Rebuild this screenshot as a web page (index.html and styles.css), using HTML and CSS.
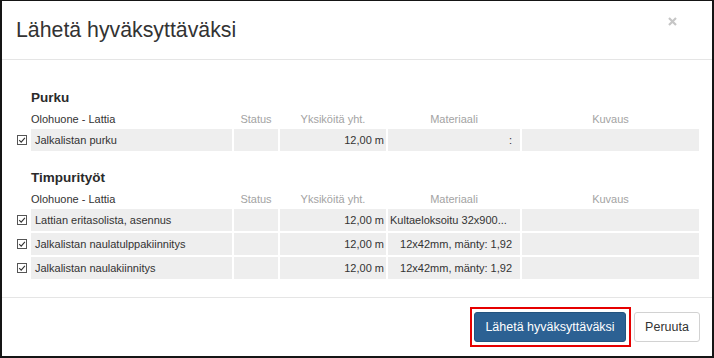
FILE: index.html
```html
<!DOCTYPE html>
<html lang="fi">
<head>
  <meta charset="UTF-8" />
  <meta name="viewport" content="width=device-width, initial-scale=1.0"/>
  <title>Lähetä hyväksyttäväksi</title>
  <link rel="stylesheet" href="styles.css">
</head>
<body>

  <div class="modal">
    <div class="modal-header">
      <h4 class="modal-title">Lähetä hyväksyttäväksi</h4>
      <button class="close" type="button" aria-label="Sulje">
        <svg width="9" height="9" viewBox="0 0 9 9"><path d="M1 1L8 8M8 1L1 8" stroke="#c6c6c6" stroke-width="2.2" fill="none"/></svg>
      </button>
    </div>

    <div class="modal-body">
      <section class="ryhma">
        <h5>Purku</h5>
        <table class="rivit">
          <colgroup>
            <col class="c-valinta"><col class="c-nimi"><col class="c-status"><col class="c-yks"><col class="c-mat"><col class="c-kuvaus">
          </colgroup>
          <tr class="otsikko">
            <th></th><th class="tila">Olohuone - Lattia</th><th>Status</th><th>Yksiköitä yht.</th><th>Materiaali</th><th>Kuvaus</th>
          </tr>
          <tr>
            <td class="valinta"><svg width="10" height="10" viewBox="0 0 10 10"><rect x=".5" y=".5" width="9" height="9" fill="#fff" stroke="#555"/><path d="M2.2 5.2L4.2 7.2L7.9 2.9" stroke="#333" stroke-width="1.1" fill="none"/></svg></td>
            <td>Jalkalistan purku</td><td></td><td class="num">12,00 m</td><td class="mat">:</td><td></td>
          </tr>
        </table>
      </section>

      <section class="ryhma">
        <h5>Timpurityöt</h5>
        <table class="rivit">
          <colgroup>
            <col class="c-valinta"><col class="c-nimi"><col class="c-status"><col class="c-yks"><col class="c-mat"><col class="c-kuvaus">
          </colgroup>
          <tr class="otsikko">
            <th></th><th class="tila">Olohuone - Lattia</th><th>Status</th><th>Yksiköitä yht.</th><th>Materiaali</th><th>Kuvaus</th>
          </tr>
          <tr>
            <td class="valinta"><svg width="10" height="10" viewBox="0 0 10 10"><rect x=".5" y=".5" width="9" height="9" fill="#fff" stroke="#555"/><path d="M2.2 5.2L4.2 7.2L7.9 2.9" stroke="#333" stroke-width="1.1" fill="none"/></svg></td>
            <td>Lattian eritasolista, asennus</td><td></td><td class="num">12,00 m</td><td class="mat vasen">Kultaeloksoitu 32x900...</td><td></td>
          </tr>
          <tr>
            <td class="valinta"><svg width="10" height="10" viewBox="0 0 10 10"><rect x=".5" y=".5" width="9" height="9" fill="#fff" stroke="#555"/><path d="M2.2 5.2L4.2 7.2L7.9 2.9" stroke="#333" stroke-width="1.1" fill="none"/></svg></td>
            <td>Jalkalistan naulatulppakiinnitys</td><td></td><td class="num">12,00 m</td><td class="mat">12x42mm, mänty: 1,92</td><td></td>
          </tr>
          <tr>
            <td class="valinta"><svg width="10" height="10" viewBox="0 0 10 10"><rect x=".5" y=".5" width="9" height="9" fill="#fff" stroke="#555"/><path d="M2.2 5.2L4.2 7.2L7.9 2.9" stroke="#333" stroke-width="1.1" fill="none"/></svg></td>
            <td>Jalkalistan naulakiinnitys</td><td></td><td class="num">12,00 m</td><td class="mat">12x42mm, mänty: 1,92</td><td></td>
          </tr>
        </table>
      </section>
    </div>

    <div class="modal-footer">
      <span class="korostus"><button class="btn btn-primary" type="button">Lähetä hyväksyttäväksi</button></span>
      <button class="btn btn-default" type="button">Peruuta</button>
    </div>
  </div>

</body>
</html>
```

FILE: styles.css
```css
* {
  box-sizing: border-box;
}

body {
  margin: 0;
  font-family: "Liberation Sans", Arial, sans-serif;
  color: #333;
  background: #fff;
}

.modal {
  height: 358px;
  border-style: solid;
  border-color: #151515;
  border-width: 1px 2px 2px 2px;
  display: flex;
  flex-direction: column;
}

.modal-header {
  height: 59px;
  border-bottom: 1px solid #e5e5e5;
  display: flex;
  align-items: center;
  padding: 0 35px 0 14px;
}

.modal-title {
  margin: 0;
  font-size: 21.3px;
  font-weight: normal;
  line-height: 24px;
  color: #333;
}

.close {
  margin-left: auto;
  align-self: flex-start;
  margin-top: 16px;
  padding: 0;
  border: none;
  background: none;
  line-height: 0;
}

.modal-body {
  flex: 1;
  padding: 30px 11px 0 13px;
}

.ryhma + .ryhma {
  margin-top: 17px;
}

.ryhma h5 {
  margin: 0 0 3px;
  padding-left: 16px;
  font-size: 13.5px;
  line-height: 16px;
  font-weight: bold;
  color: #2a2a2a;
}

.rivit {
  width: 686px;
  table-layout: fixed;
  border-collapse: separate;
  border-spacing: 2px;
  font-size: 11px;
}

.c-valinta { width: 12px; }
.c-nimi { width: 201px; }
.c-status { width: 44px; }
.c-yks { width: 106px; }
.c-mat { width: 132px; }
.c-kuvaus { width: 177px; }

.otsikko th {
  height: 16px;
  padding: 0;
  font-weight: normal;
  color: #a3a3a3;
  text-align: center;
  line-height: 16px;
}

.otsikko th.tila {
  text-align: left;
  color: #333;
}

.rivit td {
  height: 22px;
  padding: 0 4px;
  line-height: 22px;
  background: #eeeeee;
  white-space: nowrap;
  overflow: hidden;
}

.rivit td.valinta {
  background: none;
  padding: 0;
  line-height: 0;
  vertical-align: middle;
}

.rivit td.num {
  text-align: right;
  padding-right: 2px;
}

.rivit td.mat {
  text-align: right;
  padding-right: 8px;
}

.rivit td.mat.vasen {
  text-align: left;
  padding-left: 2px;
}

.modal-footer {
  height: 59px;
  border-top: 1px solid #e5e5e5;
  display: flex;
  justify-content: flex-end;
  align-items: center;
  padding-right: 12px;
}

.korostus {
  display: inline-flex;
  border: 2px solid #e60000;
  padding: 3px 3px 3px 2px;
}

.btn {
  height: 30px;
  padding: 0;
  font-family: "Liberation Sans", Arial, sans-serif;
  font-size: 12.5px;
  text-align: center;
  border-radius: 3px;
  border: 1px solid transparent;
  cursor: pointer;
}

.btn-primary {
  width: 152px;
  background: #2c6193;
  border-color: #23537f;
  color: #fff;
}

.btn-default {
  width: 66px;
  margin-left: 3px;
  background: #fff;
  border-color: #d2d2d2;
  color: #333;
}
```
